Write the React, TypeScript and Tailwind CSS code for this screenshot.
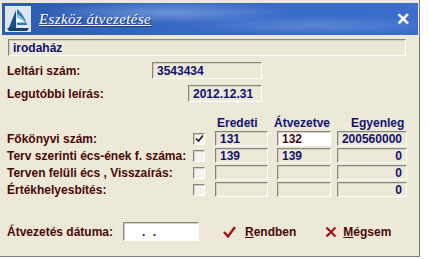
import React from "react";

const sunken =
  "border-t border-l border-t-[#8a877a] border-l-[#8a877a] border-b border-r border-b-white border-r-white shadow-[inset_1px_1px_0_#d4d0c0]";

function Field({
  value,
  className = "",
  align = "left",
  white,
  tone = "navy",
}: {
  value?: string;
  className?: string;
  align?: "left" | "right";
  white?: boolean;
  tone?: "navy" | "maroon";
}) {
  return (
    <div
      className={`${sunken} ${white ? "bg-white" : "bg-[#ece9d8]"} flex items-center px-[4px] text-[12px] font-bold leading-none ${
        align === "right" ? "justify-end" : ""
      } ${tone === "maroon" ? "text-[#4a0808]" : "text-[#12126e]"} ${className}`}
    >
      {value}
    </div>
  );
}

function Check({ checked }: { checked?: boolean }) {
  return (
    <div className={`${sunken} w-[12px] h-[12px] bg-[#f4f3ee] flex items-center justify-center`}>
      {checked && (
        <svg width="9" height="9" viewBox="0 0 9 9">
          <path d="M1 4.5 L3.5 7 L8 1.5" stroke="#1a1a1a" strokeWidth="1.6" fill="none" />
        </svg>
      )}
    </div>
  );
}

function Logo() {
  return (
    <svg width="26" height="26" viewBox="0 0 26 26">
      <rect x="0" y="0" width="26" height="26" fill="#dfe6ee" />
      <path d="M3 24 L11 4 L11 24 Z" fill="#1e4f8a" />
      <path d="M12 3 C17 7 20 12 22 19 L12 19 Z" fill="#2f7bb8" />
      <path d="M12 8 C16 10 19 13 21 17 L12 17 Z" fill="#8fc3e3" />
      <path d="M12 12 C15 13 17 14 19 16 L12 16 Z" fill="#ffffff" />
      <path d="M2 22 L24 22 L22 25 L4 25 Z" fill="#17406f" />
    </svg>
  );
}

const rows = [
  { label: "Főkönyvi szám:", checked: true, ered: "131", atv: "132", egy: "200560000", white: true },
  { label: "Terv szerinti écs-ének f. száma:", ered: "139", atv: "139", egy: "0" },
  { label: "Terven felüli écs , Visszaírás:", ered: "", atv: "", egy: "0" },
  { label: "Értékhelyesbítés:", ered: "", atv: "", egy: "0" },
];

export default function App() {
  return (
    <div className="w-[429px] h-[259px] bg-white font-['Liberation_Sans',Arial,sans-serif]">
      <div className="w-[420px] h-[257px] bg-[#ece9d8] border-r border-b border-[#7f7d72] flex flex-col pt-[3px] pl-[2px] pr-[1px]">
        {/* title bar */}
        <div className="h-[32px] flex items-center pl-[3px] pr-[8px] bg-[radial-gradient(ellipse_at_40%_30%,rgba(170,200,240,0.45),transparent_35%),radial-gradient(ellipse_at_75%_70%,rgba(150,185,235,0.35),transparent_30%),linear-gradient(90deg,#2c5cae,#3869c4_45%,#3a6dcc)]">
          <Logo />
          <span className="ml-[8px] text-white italic underline text-[15px] font-['Liberation_Serif','Times_New_Roman',serif] tracking-[0.4px] [text-shadow:1px_1px_0_#1d3f7a]">
            Eszköz átvezetése
          </span>
          <span className="ml-auto text-white font-bold text-[17px] leading-none">✕</span>
        </div>

        {/* name */}
        <Field value="irodaház" className="mt-[4px] ml-[6px] w-[398px] h-[17px]" />

        <div className="mt-[6px] flex items-center h-[17px]">
          <div className="w-[150px] pl-[5px] text-[12px] font-bold text-[#4a0808]">Leltári szám:</div>
          <Field value="3543434" className="w-[110px] h-[17px]" />
        </div>

        <div className="mt-[6px] flex items-center h-[17px]">
          <div className="w-[186px] pl-[5px] text-[12px] font-bold text-[#4a0808]">Legutóbbi leírás:</div>
          <Field value="2012.12.31" className="w-[74px] h-[17px]" />
        </div>

        {/* headers */}
        <div className="mt-[14px] h-[14px] flex items-center text-[12px] font-bold text-[#12126e]">
          <div className="w-[215px]" />
          <div className="w-[57px]">Eredeti</div>
          <div className="w-[77px]">Átvezetve</div>
          <div>Egyenleg</div>
        </div>

        <div className="mt-[1px] flex flex-col gap-[2px]">
          {rows.map((r) => (
            <div key={r.label} className="flex items-center h-[15px]">
              <div className="w-[191px] pl-[5px] text-[12px] font-bold text-[#4a0808] whitespace-nowrap">
                {r.label}
              </div>
              <Check checked={r.checked} />
              <Field value={r.ered} className="ml-[10px] w-[53px] h-[15px]" />
              <Field
                value={r.atv}
                white={r.white}
                tone={r.white ? "maroon" : "navy"}
                className="ml-[9px] w-[54px] h-[15px]"
              />
              <Field value={r.egy} align="right" className="ml-[6px] w-[70px] h-[15px]" />
            </div>
          ))}
        </div>

        {/* bottom */}
        <div className="mt-[25px] flex items-center h-[19px]">
          <div className="w-[121px] pl-[5px] text-[12px] font-bold text-[#4a0808]">Átvezetés dátuma:</div>
          <div className={`${sunken} bg-white w-[76px] h-[19px] flex items-center pl-[18px] text-[12px] font-bold text-[#222] tracking-[2px]`}>
            . .
          </div>
          <div className="ml-[24px] flex items-center gap-[9px] text-[12px] font-bold text-[#4a0808]">
            <svg width="13" height="12" viewBox="0 0 13 12">
              <path d="M1 6 L5 10.5 L12 1" stroke="#a01414" strokeWidth="2.4" fill="none" />
            </svg>
            <span>
              <span className="underline">R</span>endben
            </span>
          </div>
          <div className="ml-[29px] flex items-center gap-[6px] text-[12px] font-bold text-[#4a0808]">
            <svg width="12" height="12" viewBox="0 0 12 12">
              <path d="M1.5 1.5 L10.5 10.5 M10.5 1.5 L1.5 10.5" stroke="#a01414" strokeWidth="2.2" />
            </svg>
            <span>
              <span className="underline">M</span>égsem
            </span>
          </div>
        </div>
      </div>
    </div>
  );
}
